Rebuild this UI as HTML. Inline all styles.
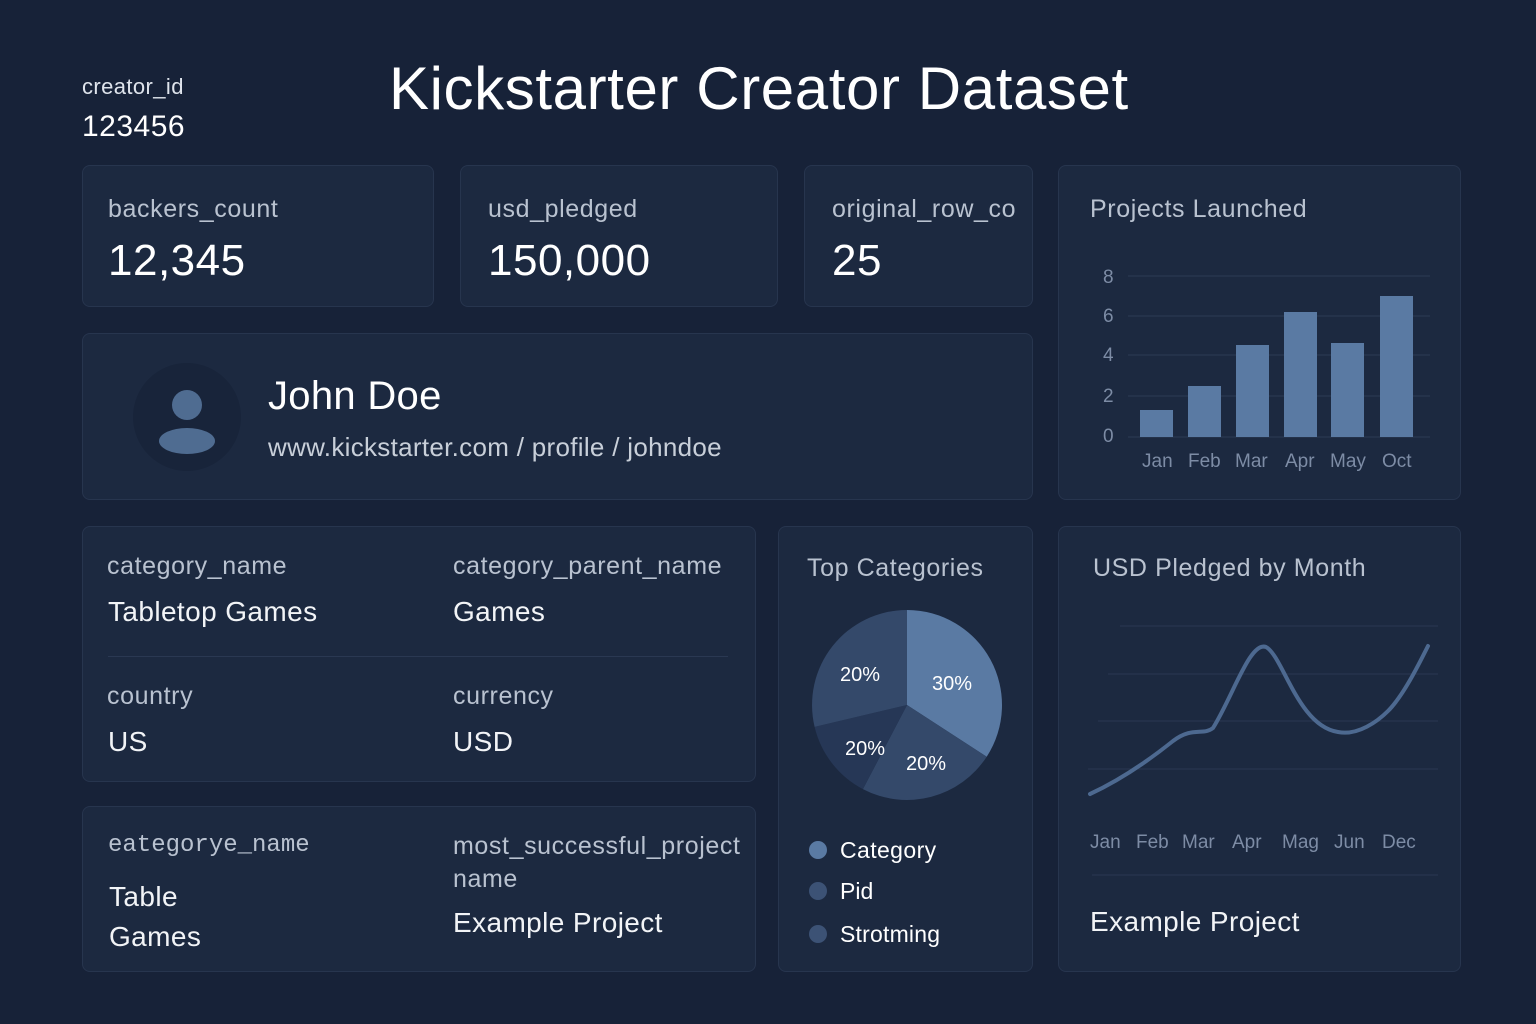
<!DOCTYPE html><html><head><meta charset="utf-8"><style>
*{margin:0;padding:0;box-sizing:border-box}
body{width:1536px;height:1024px;background:#172238;font-family:"Liberation Sans","DejaVu Sans",sans-serif;position:relative;overflow:hidden;color:#fff}
.c{position:absolute;background:#1c2940;border:1px solid #27354e;border-radius:8px}
.t{position:absolute;white-space:nowrap}
.l{color:#b9c2d0;font-size:25px;letter-spacing:0.6px}
.v{color:#fff;font-size:44px;letter-spacing:0.5px}
.m{color:#f2f4f7;font-size:28px;letter-spacing:0.4px}
.ax{color:#7d8ca5;font-size:19px}
</style></head><body>
<div class="t" style="left:82px;top:74px;font-size:22px;color:#dfe4ec;letter-spacing:0.4px">creator_id</div>
<div class="t" style="left:82px;top:110px;font-size:30px;color:#fff;letter-spacing:0.5px">123456</div>
<div class="t" style="left:389px;top:54px;font-size:60px;color:#fff;letter-spacing:0.6px">Kickstarter Creator Dataset</div>

<div class="c" style="left:82px;top:165px;width:352px;height:142px"></div>
<div class="t l" style="left:108px;top:195px">backers_count</div>
<div class="t v" style="left:108px;top:236px">12,345</div>
<div class="c" style="left:460px;top:165px;width:318px;height:142px"></div>
<div class="t l" style="left:488px;top:195px">usd_pledged</div>
<div class="t v" style="left:488px;top:236px">150,000</div>
<div class="c" style="left:804px;top:165px;width:229px;height:142px;overflow:hidden"><div class="t l" style="left:27px;top:29px">original_row_co</div><div class="t v" style="left:27px;top:70px">25</div></div>

<div class="c" style="left:1058px;top:165px;width:403px;height:335px"></div>
<div class="t l" style="left:1090px;top:195px">Projects Launched</div>
<svg style="position:absolute;left:1058px;top:165px" width="403" height="335">
<g stroke="#2c3a54" stroke-width="1"><line x1="70" y1="111" x2="372" y2="111"/><line x1="70" y1="151" x2="372" y2="151"/><line x1="70" y1="190" x2="372" y2="190"/><line x1="70" y1="231" x2="372" y2="231"/><line x1="70" y1="272" x2="372" y2="272"/></g>
<g fill="#5a7aa3"><rect x="82" y="245" width="33" height="27"/><rect x="130" y="221" width="33" height="51"/><rect x="178" y="180" width="33" height="92"/><rect x="226" y="147" width="33" height="125"/><rect x="273" y="178" width="33" height="94"/><rect x="322" y="131" width="33" height="141"/></g>
</svg>
<div class="t ax" style="left:1103px;top:267px">8</div><div class="t ax" style="left:1103px;top:306px">6</div><div class="t ax" style="left:1103px;top:345px">4</div><div class="t ax" style="left:1103px;top:386px">2</div><div class="t ax" style="left:1103px;top:426px">0</div>
<div class="t ax" style="left:1142px;top:451px">Jan</div><div class="t ax" style="left:1188px;top:451px">Feb</div><div class="t ax" style="left:1235px;top:451px">Mar</div><div class="t ax" style="left:1285px;top:451px">Apr</div><div class="t ax" style="left:1330px;top:451px">May</div><div class="t ax" style="left:1382px;top:451px">Oct</div>

<div class="c" style="left:82px;top:333px;width:951px;height:167px"></div>
<svg style="position:absolute;left:132px;top:362px" width="110" height="110"><circle cx="55" cy="55" r="54" fill="#18243a"/><circle cx="55" cy="43" r="15" fill="#4f6c91"/><ellipse cx="55" cy="79" rx="28" ry="13" fill="#4f6c91"/></svg>
<div class="t" style="left:268px;top:374px;font-size:40px;color:#fff;letter-spacing:0.3px">John Doe</div>
<div class="t" style="left:268px;top:432px;font-size:26px;color:#c8cfd9;letter-spacing:0.3px">www.kickstarter.com / profile / johndoe</div>

<div class="c" style="left:82px;top:526px;width:674px;height:256px"></div>
<div style="position:absolute;left:108px;top:656px;width:620px;height:1px;background:#2a3852"></div>
<div class="t l" style="left:107px;top:552px">category_name</div>
<div class="t m" style="left:108px;top:596px">Tabletop Games</div>
<div class="t l" style="left:453px;top:552px">category_parent_name</div>
<div class="t m" style="left:453px;top:596px">Games</div>
<div class="t l" style="left:107px;top:682px">country</div>
<div class="t m" style="left:108px;top:726px">US</div>
<div class="t l" style="left:453px;top:682px">currency</div>
<div class="t m" style="left:453px;top:726px">USD</div>

<div class="c" style="left:82px;top:806px;width:674px;height:166px"></div>
<div class="t l" style="left:108px;top:832px;font-family:'Liberation Mono',monospace;font-size:24px;letter-spacing:0">eategorye_name</div>
<div class="t m" style="left:109px;top:877px;line-height:40px">Table<br>Games</div>
<div class="t l" style="left:453px;top:830px;line-height:33px">most_successful_project<br>name</div>
<div class="t m" style="left:453px;top:907px">Example Project</div>

<div class="c" style="left:778px;top:526px;width:255px;height:446px"></div>
<div class="t l" style="left:807px;top:554px">Top Categories</div>
<svg style="position:absolute;left:778px;top:526px" width="255" height="446">
<g transform="translate(129,179)">
<path d="M0 0 L0 -95 A95 95 0 0 1 79.7 51.7 Z" fill="#5a7aa3"/>
<path d="M0 0 L79.7 51.7 A95 95 0 0 1 -44.1 84.1 Z" fill="#34496a"/>
<path d="M0 0 L-44.1 84.1 A95 95 0 0 1 -92.4 21.9 Z" fill="#263756"/>
<path d="M0 0 L-92.4 21.9 A95 95 0 0 1 0 -95 Z" fill="#34496a"/>
</g>
<circle cx="40" cy="324" r="9" fill="#5a7aa3"/><circle cx="40" cy="365" r="9" fill="#3c5275"/><circle cx="40" cy="408" r="9" fill="#3c5275"/>
</svg>
<div class="t" style="left:840px;top:664px;font-size:20px">20%</div>
<div class="t" style="left:932px;top:673px;font-size:20px">30%</div>
<div class="t" style="left:845px;top:738px;font-size:20px">20%</div>
<div class="t" style="left:906px;top:753px;font-size:20px">20%</div>
<div class="t" style="left:840px;top:837px;font-size:23px;letter-spacing:0.4px">Category</div>
<div class="t" style="left:840px;top:878px;font-size:23px">Pid</div>
<div class="t" style="left:840px;top:921px;font-size:23px;letter-spacing:0.2px">Strotming</div>

<div class="c" style="left:1058px;top:526px;width:403px;height:446px"></div>
<div class="t l" style="left:1093px;top:554px">USD Pledged by Month</div>
<svg style="position:absolute;left:1058px;top:526px" width="403" height="446">
<g stroke="#2a3852" stroke-width="1"><line x1="62" y1="100" x2="380" y2="100"/><line x1="50" y1="148" x2="380" y2="148"/><line x1="40" y1="195" x2="380" y2="195"/><line x1="30" y1="243" x2="380" y2="243"/><line x1="34" y1="349" x2="380" y2="349"/></g>
<path d="M32 268 C60 255 90 235 115 215 C135 200 145 210 155 202 C175 170 192 115 208 121 C225 130 240 200 280 206 C300 210 320 195 330 185 C345 170 360 140 370 120" fill="none" stroke="#4d6990" stroke-width="4" stroke-linecap="round"/>
</svg>
<div class="t ax" style="left:1090px;top:832px">Jan</div><div class="t ax" style="left:1136px;top:832px">Feb</div><div class="t ax" style="left:1182px;top:832px">Mar</div><div class="t ax" style="left:1232px;top:832px">Apr</div><div class="t ax" style="left:1282px;top:832px">Mag</div><div class="t ax" style="left:1334px;top:832px">Jun</div><div class="t ax" style="left:1382px;top:832px">Dec</div>
<div class="t m" style="left:1090px;top:906px">Example Project</div>
</body></html>
